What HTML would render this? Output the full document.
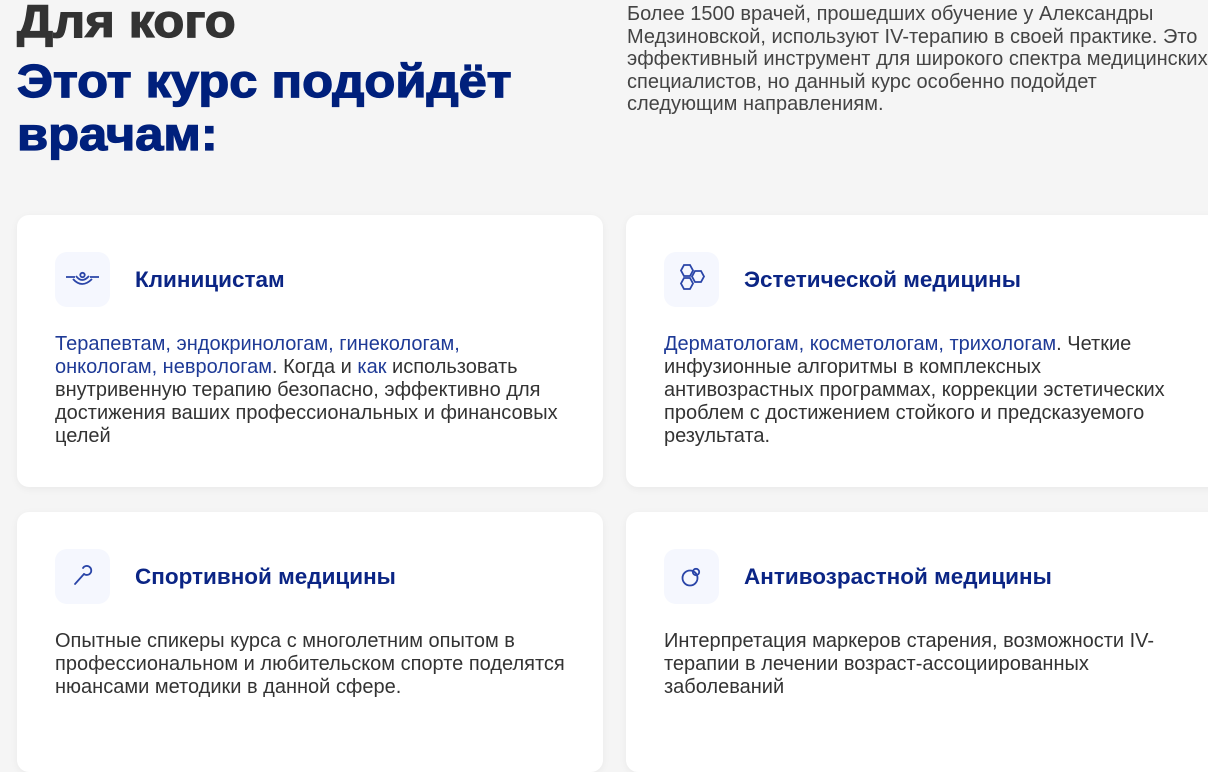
<!DOCTYPE html>
<html><head><meta charset="utf-8"><style>
*{margin:0;padding:0;box-sizing:border-box}
body{width:1208px;height:720px;overflow:hidden;background:#f5f5f5;font-family:"Liberation Sans",Arial,sans-serif;position:relative}
.h{position:absolute;left:17px;font-weight:bold;font-size:46px;line-height:53px;white-space:nowrap;transform:scaleX(1.1);transform-origin:0 0;-webkit-text-stroke:1.3px currentColor}
.intro{position:absolute;left:627px;top:3px;font-size:20px;line-height:22.5px;color:#444;white-space:nowrap}
.card{position:absolute;background:#fff;border-radius:12px;box-shadow:0 2px 8px rgba(0,0,0,.05)}
.ib{position:absolute;left:38px;top:37px;width:55px;height:55px;border-radius:12px;background:#f5f7fe}
.ib svg{position:absolute;left:0;top:0}
.t{position:absolute;left:118px;top:52px;font-size:22.5px;font-weight:bold;color:#0b2585;white-space:nowrap}
.p{position:absolute;left:38px;top:118px;font-size:20px;line-height:23px;color:#333;white-space:nowrap}
.l{color:#1e3a96}
</style></head><body>
<div class="h" style="top:-5px;color:#333">Для кого</div>
<div class="h" style="top:55px;color:#00207c">Этот курс подойдёт<br>врачам:</div>
<div class="intro">Более 1500 врачей, прошедших обучение у Александры<br>Медзиновской, используют IV-терапию в своей практике. Это<br>эффективный инструмент для широкого спектра медицинских<br>специалистов, но данный курс особенно подойдет<br>следующим направлениям.</div>

<div class="card" style="left:17px;top:215px;width:586px;height:272px">
<div class="ib"><svg width="55" height="55" viewBox="0 0 55 55" fill="none" stroke="#2a45a8" stroke-width="1.8"><path d="M11 25h9M35 25h9"/><path d="M21 24q6 8 13 0"/><path d="M18 27q9 10 19 0"/><circle cx="27.5" cy="23" r="2.2"/></svg></div>
<div class="t">Клиницистам</div>
<div class="p"><span class="l">Терапевтам, эндокринологам, гинекологам,<br>онкологам, неврологам</span>. Когда и <span class="l">как</span> использовать<br>внутривенную терапию безопасно, эффективно для<br>достижения ваших профессиональных и финансовых<br>целей</div>
</div>

<div class="card" style="left:626px;top:215px;width:600px;height:272px">
<div class="ib"><svg width="55" height="55" viewBox="0 0 55 55" fill="none" stroke="#2a45a8" stroke-width="1.8"><path d="M20 13l6 0 3 5.5-3 5.5-6 0-3-5.5z"/><path d="M31 19l6 0 3 5.5-3 5.5-6 0-3-5.5z"/><path d="M20 26l6 0 3 5.5-3 5.5-6 0-3-5.5z"/></svg></div>
<div class="t">Эстетической медицины</div>
<div class="p"><span class="l">Дерматологам, косметологам, трихологам</span>. Четкие<br>инфузионные алгоритмы в комплексных<br>антивозрастных программах, коррекции эстетических<br>проблем с достижением стойкого и предсказуемого<br>результата.</div>
</div>

<div class="card" style="left:17px;top:512px;width:586px;height:260px">
<div class="ib"><svg width="55" height="55" viewBox="0 0 55 55" fill="none" stroke="#2a45a8" stroke-width="1.8" stroke-linecap="round"><path d="M20 35l9-10"/><path d="M29 25a4.5 4.5 0 1 0-1-6"/></svg></div>
<div class="t">Спортивной медицины</div>
<div class="p">Опытные спикеры курса с многолетним опытом в<br>профессиональном и любительском спорте поделятся<br>нюансами методики в данной сфере.</div>
</div>

<div class="card" style="left:626px;top:512px;width:600px;height:260px">
<div class="ib"><svg width="55" height="55" viewBox="0 0 55 55" fill="none" stroke="#2a45a8" stroke-width="1.8"><circle cx="26" cy="29" r="7.5"/><circle cx="32" cy="23" r="3.2"/></svg></div>
<div class="t">Антивозрастной медицины</div>
<div class="p">Интерпретация маркеров старения, возможности IV-<br>терапии в лечении возраст-ассоциированных<br>заболеваний</div>
</div>
</body></html>
